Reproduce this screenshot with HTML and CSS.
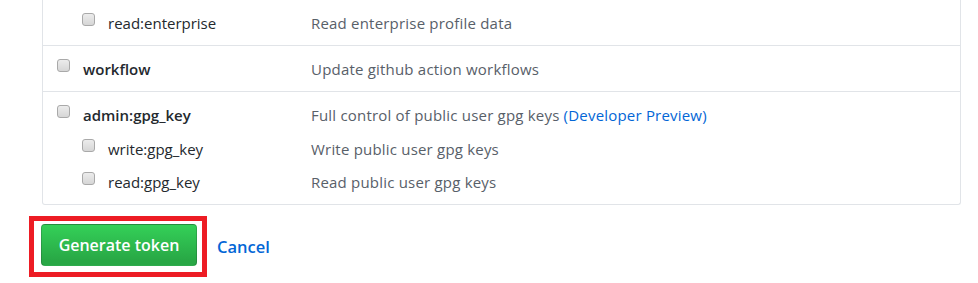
FILE: index.html
```html
<!DOCTYPE html>
<html>
<head>
<meta charset="utf-8">
<link rel="stylesheet" href="styles.css">
</head>
<body>
<div class="page">
  <div class="scopes">
    <div class="scope-row first">
      <div class="line sub">
        <div class="scope"><span class="cb"></span><span class="name">read:enterprise</span></div>
        <div class="desc">Read enterprise profile data</div>
      </div>
    </div>
    <div class="scope-row">
      <div class="line">
        <div class="scope"><span class="cb"></span><span class="name strong">workflow</span></div>
        <div class="desc">Update github action workflows</div>
      </div>
    </div>
    <div class="scope-row">
      <div class="line">
        <div class="scope"><span class="cb"></span><span class="name strong">admin:gpg_key</span></div>
        <div class="desc">Full control of public user gpg keys <a class="link" href="#">(Developer Preview)</a></div>
      </div>
      <div class="line sub first-sub">
        <div class="scope"><span class="cb"></span><span class="name">write:gpg_key</span></div>
        <div class="desc">Write public user gpg keys</div>
      </div>
      <div class="line sub next-sub">
        <div class="scope"><span class="cb"></span><span class="name">read:gpg_key</span></div>
        <div class="desc">Read public user gpg keys</div>
      </div>
    </div>
  </div>
  <div class="actions">
    <div class="highlight"><button class="btn-primary" type="button">Generate token</button></div>
    <a class="cancel" href="#">Cancel</a>
  </div>
</div>
</body>
</html>
```
FILE: styles.css
```css
html, body {
  margin: 0;
  padding: 0;
  background: #fff;
}
body {
  font-family: "Open Sans", "Noto Sans", sans-serif;
  font-size: 15px;
  color: #24292e;
  overflow: hidden;
}
.page {
  padding-left: 42px;
}
.scopes {
  width: 919px;
  box-sizing: border-box;
  border: 1px solid #e1e4e8;
  border-top: none;
  border-radius: 0 0 3px 3px;
}
.scope-row {
  border-top: 1px solid #e1e4e8;
  padding: 12px 14px 9px;
}
.scope-row.first {
  border-top: none;
  padding-top: 12px;
}
.line {
  display: flex;
  align-items: flex-start;
  height: 24px;
  line-height: 22px;
}
.line.first-sub { margin-top: 10px; }
.line.next-sub { margin-top: 9px; }
.scope {
  width: 254px;
  box-sizing: border-box;
  display: flex;
  align-items: flex-start;
  gap: 13px;
}
.line.sub .scope {
  padding-left: 25px;
}
.cb {
  flex: none;
  width: 13px;
  height: 13px;
  margin-top: 1px;
  box-sizing: border-box;
  border: 1px solid #a9a9a9;
  border-radius: 3px;
  background: linear-gradient(#ececec, #d6d6d6);
}
.name {
  color: #24292e;
}
.name.strong {
  font-weight: 600;
}
.desc {
  color: #586069;
  letter-spacing: 0.2px;
}
.link {
  color: #0366d6;
  text-decoration: none;
}
.actions {
  display: flex;
  align-items: center;
  margin-top: 11px;
}
.highlight {
  margin-left: -13px;
  border: 5px solid #ed1c24;
  padding: 3px 5px 6px 7px;
  display: flex;
}
.btn-primary {
  width: 156px;
  height: 42px;
  box-sizing: border-box;
  font-family: "Open Sans", "Noto Sans", sans-serif;
  font-size: 16px;
  font-weight: 600;
  color: #fff;
  border: 1px solid rgba(27, 31, 35, 0.2);
  border-radius: 4px;
  background: linear-gradient(180deg, #34d058 0%, #28a745 90%);
  padding: 0;
  cursor: pointer;
}
.cancel {
  margin-left: 10px;
  font-size: 16.5px;
  font-weight: 600;
  color: #0366d6;
  text-decoration: none;
}
```
